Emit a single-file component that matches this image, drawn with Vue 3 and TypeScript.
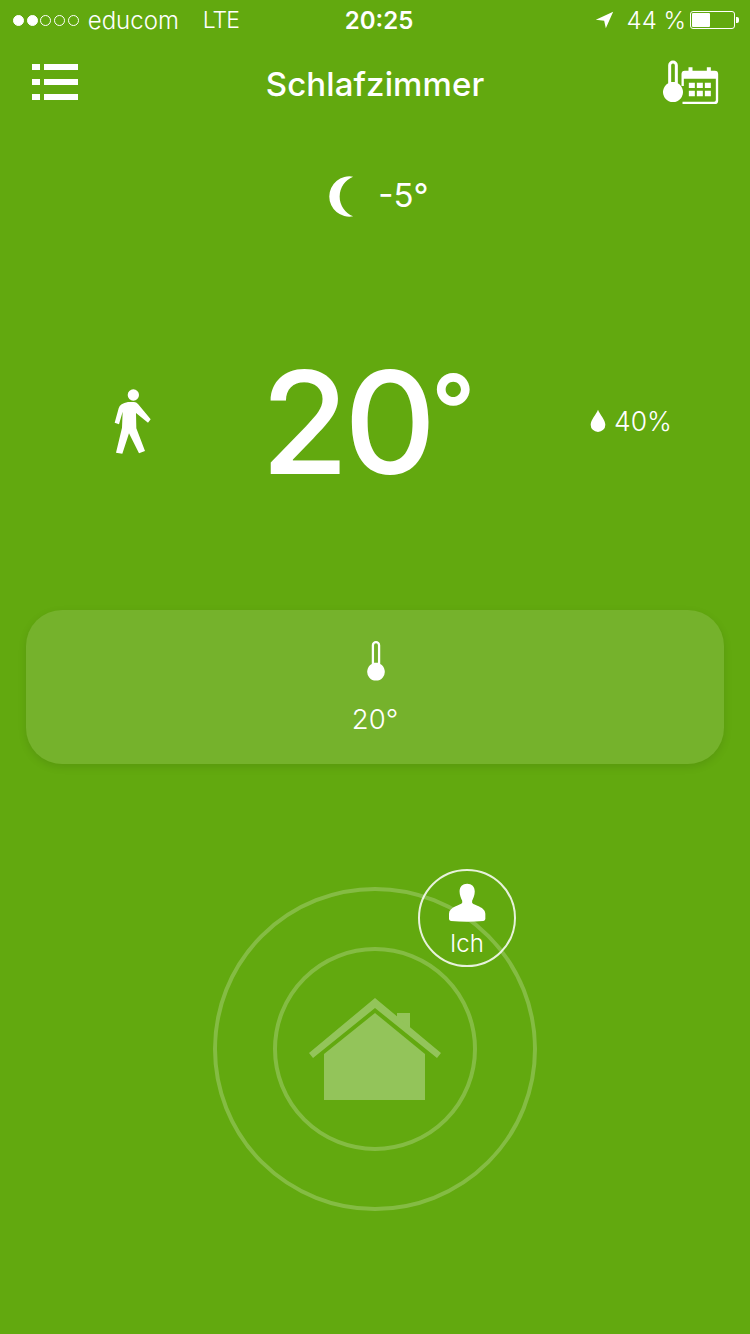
<script setup lang="ts">
// Room screen of the thermostat app
const signalDots = [true, true, false, false, false];
</script>

<template>
  <div class="screen">
    <div class="status-bar">
      <div class="status-left">
        <span class="dots">
          <i v-for="(on, i) in signalDots" :key="i" class="dot" :class="{ on }"></i>
        </span>
        <span class="carrier">educom</span>
        <span class="network">LTE</span>
      </div>
      <div class="clock">20:25</div>
      <div class="status-right">
        <svg class="arrow" viewBox="108 36 56 54"><path d="M110 62 162 38 140 88 135 65Z" fill="#fff" /></svg>
        <span class="percent">44 %</span>
        <span class="battery"><b></b></span>
        <span class="nub"></span>
      </div>
    </div>

    <div class="nav">
      <svg class="menu" viewBox="0 0 46 36" fill="#fff">
        <rect x="0" y="0" width="8" height="6" /><rect x="12" y="0" width="34" height="6" />
        <rect x="0" y="15" width="8" height="6" /><rect x="12" y="15" width="34" height="6" />
        <rect x="0" y="30" width="8" height="6" /><rect x="12" y="30" width="34" height="6" />
      </svg>
      <h1 class="title">Schlafzimmer</h1>
      <svg class="schedule" viewBox="305 180 170 135">
        <path fill="#fff" fill-rule="evenodd" d="M323 250V196a14.500 14.500 0 0 1 29 0V250a30 30 0 1 1-29 0ZM332 196V246H343V196a5.500 5.500 0 0 0-11 0Z" />
        <path fill="#fff" fill-rule="evenodd" d="M363 222q0-10 10-10H384V202H396V212H439V202H451V212H463q10 0 10 10V302q0 10-10 10H366V305H461q5 0 5-5V236H370V258H363Z" />
        <path fill="#fff" d="M385 248h18v16h-18ZM409 248h18v16h-18ZM433 248h18v16h-18ZM385 272h18v17h-18ZM409 272h18v17h-18ZM433 272h18v17h-18Z" />
      </svg>
    </div>

    <div class="weather">
      <svg class="moon" viewBox="58 46 76 122"><path d="M132 48A60 60 0 1 0 132 166 63.500 63.500 0 0 1 132 48Z" fill="#fff" /></svg>
      <span>-5°</span>
    </div>

    <div class="hero">
      <div class="hero-left">
        <svg class="walker" viewBox="70 54 114 198" fill="#fff">
          <circle cx="128" cy="72" r="17" />
          <path d="M112 93H130Q137 93 142 99L180 145 172 155 136 126 137 172 163 240 145 247 115 187 95 248 76 245 94 170 96 122 85 160 72 155 84 112Q88 97 112 93Z" />
        </svg>
      </div>
      <div class="temp">20<span class="temp-degree">°</span></div>
      <div class="hero-right">
        <svg class="drop" viewBox="30 43 48 72"><path d="M54 45C48 60 32 75 32 90a22 22 0 0 0 44 0C76 75 60 60 54 45Z" fill="#fff" /></svg>
        <span>40%</span>
      </div>
    </div>

    <div class="card">
      <svg class="thermo" viewBox="138 30 60 126">
        <path fill="#fff" fill-rule="evenodd" d="M155 104V46a13 13 0 0 1 26 0V104a27 27 0 1 1-26 0ZM162 46V100H174V46a6 6 0 0 0-12 0Z" />
      </svg>
      <span class="card-label">20°</span>
    </div>

    <div class="presence">
      <svg class="rings" viewBox="210 885 330 330">
        <g fill="none" stroke="#fff" stroke-opacity="0.22" stroke-width="4">
          <circle cx="375" cy="1049" r="160" />
          <circle cx="375" cy="1049" r="100" />
        </g>
        <g fill="#93c45a">
          <path d="M397 1013H410V1028L397 1018Z" />
          <path d="M375 998 441 1053 437 1058 375 1008 313 1058 309 1053Z" />
          <path d="M375 1013 425 1054V1100H324V1054Z" />
        </g>
      </svg>
      <div class="badge">
        <svg class="person" viewBox="145 70 112 118">
          <path fill="#fff" d="M200 72c14 0 23 9 23 24 0 12-5 22-8 28v6c4 8 40 12 40 33v16q0 5-6 6-50 5-98 0-6-1-6-6v-16c0-21 36-25 40-33v-6c-3-6-8-16-8-28 0-15 9-24 23-24Z" />
        </svg>
        <span>Ich</span>
      </div>
    </div>
  </div>
</template>

<style scoped>
.screen {
  width: 750px;
  height: 1334px;
  background: #62a90f;
  color: #fff;
  font-family: Inter, "Liberation Sans", sans-serif;
  overflow: hidden;
}

.status-bar {
  height: 40px;
  padding: 0 11px 0 13px;
  display: grid;
  grid-template-columns: 1fr auto 1fr;
  align-items: center;
  font-size: 24px;
  box-sizing: border-box;
}

.status-left,
.status-right {
  display: flex;
  align-items: center;
}

.status-right {
  justify-content: flex-end;
}

.dots {
  display: flex;
  gap: 2.700px;
}

.dot {
  width: 11px;
  height: 11px;
  border: 1px solid #fff;
  border-radius: 50%;
  box-sizing: border-box;
}

.dot.on {
  background: #fff;
}

.carrier {
  margin-left: 9px;
  font-size: 24px;
  font-weight: 300;
}

.network {
  margin-left: 24px;
  font-size: 23px;
  font-weight: 300;
  letter-spacing: -1px;
}

.clock {
  margin-left: 6px;
  font-weight: 600;
}

.arrow {
  width: 19px;
  height: 18px;
}

.percent {
  margin-left: 13px;
  font-weight: 300;
}

.battery {
  margin-left: 4px;
  width: 45px;
  height: 18px;
  border: 1px solid #fff;
  border-radius: 3px;
  padding: 1px;
  box-sizing: border-box;
  display: flex;
}

.battery b {
  width: 18px;
  background: #fff;
  border-radius: 1px;
}

.nub {
  margin-left: 1px;
  width: 3px;
  height: 6px;
  background: #fff;
  border-radius: 0 2px 2px 0;
}

.nav {
  height: 88px;
  padding: 0 32px;
  display: grid;
  grid-template-columns: 1fr auto 1fr;
  align-items: center;
}

.menu {
  width: 46px;
  height: 36px;
  margin-top: -4px;
}

.title {
  margin: 0;
  font-size: 33px;
  font-weight: 500;
  letter-spacing: 0.1px;
}

.schedule {
  justify-self: end;
  width: 57px;
  height: 45px;
  margin-right: -1px;
  margin-top: -4px;
}

.weather {
  margin-top: 47px;
  height: 40px;
  padding-left: 7px;
  display: flex;
  align-items: center;
  justify-content: center;
  gap: 24px;
  font-size: 33px;
  font-weight: 400;
}

.moon {
  width: 26px;
  height: 41px;
  margin-top: 2px;
}

.hero {
  margin-top: 145px;
  height: 120px;
  display: grid;
  grid-template-columns: 225px 1fr 225px;
  align-items: center;
}

.hero-left {
  padding-left: 114px;
  padding-top: 2px;
  display: flex;
}

.walker {
  width: 38px;
  height: 66px;
}

.temp {
  padding-right: 14px;
  padding-top: 2px;
  text-align: center;
  font-size: 143px;
  font-weight: 500;
  line-height: 120px;
  letter-spacing: -5px;
}

.temp-degree {
  font-size: 96px;
  font-weight: 600;
  line-height: 0;
  letter-spacing: 0;
  vertical-align: 31px;
}

.hero-right {
  padding-left: 65px;
  display: flex;
  align-items: center;
  gap: 8px;
  font-size: 26.500px;
  font-weight: 300;
}

.drop {
  width: 16px;
  height: 24px;
}

.card {
  margin: 130px 26px 0;
  height: 154px;
  background: #75b22c;
  border-radius: 36px;
  box-shadow: 0 3px 8px rgba(0, 0, 0, 0.1);
  display: flex;
  flex-direction: column;
  align-items: center;
}

.thermo {
  margin: 30px 0 0 2px;
  width: 20px;
  height: 41px;
}

.card-label {
  margin-top: 18px;
  font-size: 27.500px;
  font-weight: 300;
  line-height: 40px;
}

.presence {
  margin-top: 121px;
  position: relative;
  display: flex;
  justify-content: center;
}

.rings {
  width: 330px;
  height: 330px;
}

.badge {
  position: absolute;
  left: 418px;
  top: -16px;
  width: 98px;
  height: 98px;
  border: 2px solid rgba(255, 255, 255, 0.85);
  border-radius: 50%;
  box-sizing: border-box;
  display: flex;
  flex-direction: column;
  align-items: center;
  font-size: 24px;
  font-weight: 300;
}

.person {
  margin-top: 12px;
  width: 37px;
  height: 39px;
}

.badge span {
  margin-top: 7px;
  line-height: 29px;
}
</style>
